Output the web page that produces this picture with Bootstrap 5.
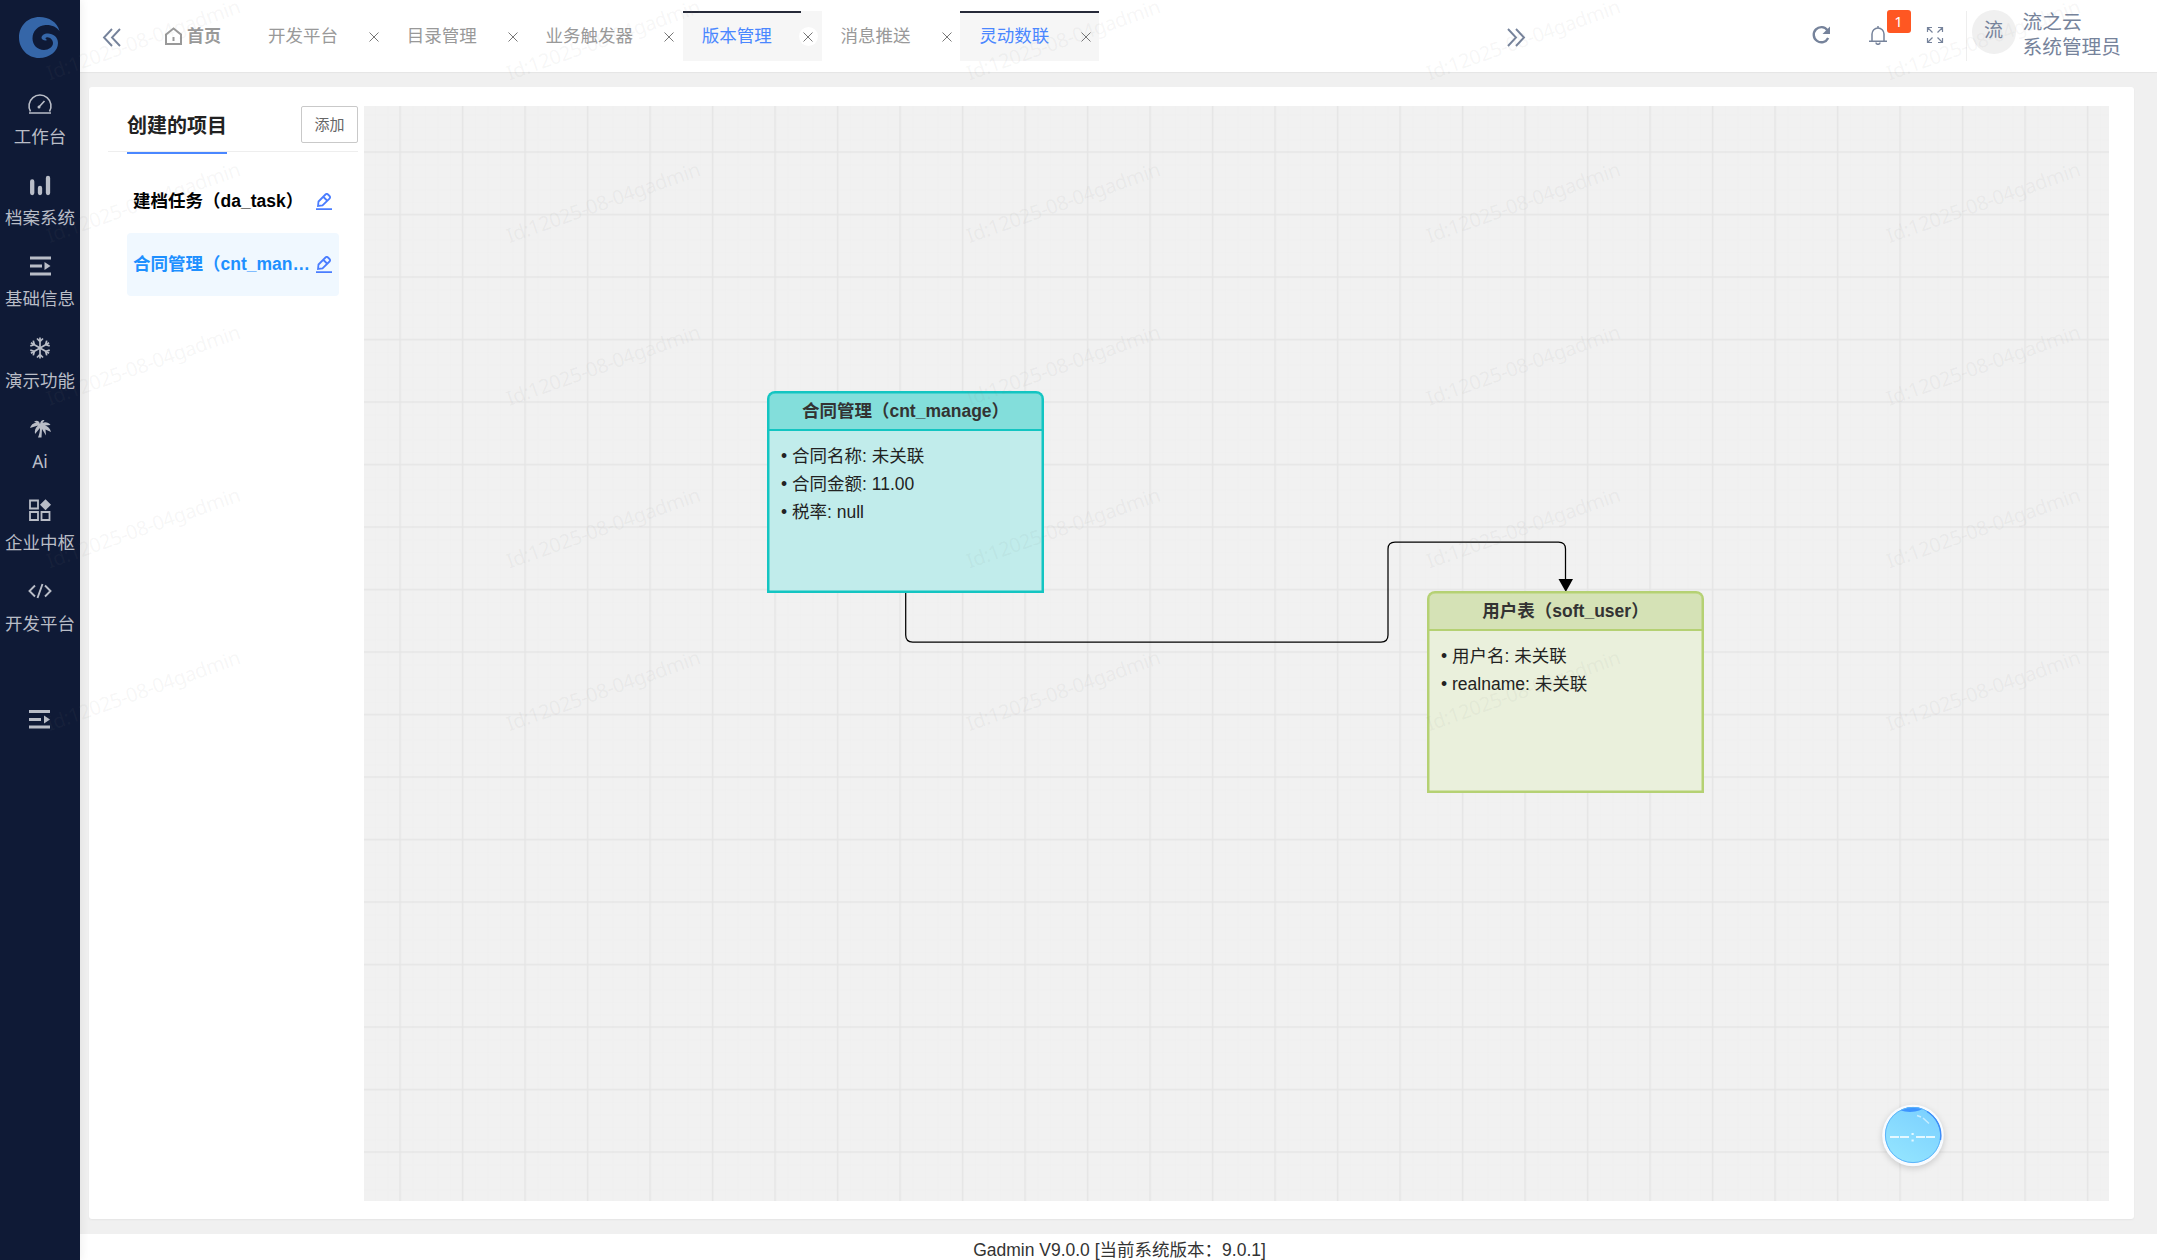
<!DOCTYPE html>
<html lang="zh-CN">
<head>
<meta charset="utf-8">
<title>Gadmin</title>
<link rel="stylesheet" href="https://cdn.jsdelivr.net/npm/bootstrap@5.3.0/dist/css/bootstrap.min.css">
<style>
body{font-family:"Noto Sans","Noto Sans CJK SC",sans-serif;background:#f0f0f0;height:1260px;overflow:hidden;font-size:17.5px;color:#222}
svg{display:block;flex:none}
.arial{font-family:"Liberation Sans","Noto Sans CJK SC",sans-serif}
.side{width:80px;background:#0f1a36;color:#b9bdc7;flex:none;z-index:2;box-shadow:2px 0 8px rgba(0,0,0,.06)}
.side-logo{height:76px;padding:14px 0 0 17px}
.side-item{height:81.2px;padding-top:14px;line-height:24px;white-space:nowrap;flex:none}
.side-item svg{margin-bottom:6px}
.side-fold{padding-top:61px}
.topbar{height:72px;flex:none;box-shadow:0 1px 1px rgba(0,0,0,.04);z-index:1}
.fold-tabs{width:62px;padding:3px 0 0 22px;color:#76839b}
.tab-home{width:107px;padding-left:22px;color:#999;font-weight:700;font-size:17px}
.tab-box{height:50px;width:138.8px;padding:0 4px 1px 19px;color:#999;position:relative;white-space:nowrap}
.tab-box.wide-tab{width:156.2px}
.tab-box.on{background:#f6f6f6;color:#4a87ff}
.tab-box.on::before{content:"";position:absolute;left:0;top:0;width:100%;height:2px;background:#262a39}
.tab-box.part::before{width:118px}
.tab-x{width:19px;height:19px;border-radius:50%;color:#777;margin-top:2px}
.part .tab-x{background:#fff}
.more-tabs{padding-top:2px}
.tools{color:#76839b;padding:0 36px 0 285px}
.tool-icon{position:relative;top:-1px}
.notice-badge{position:absolute;left:19px;top:-15px;width:24px;height:23px;background:#ff5722;color:#fff;font-size:15px;line-height:22px;border-radius:3px;text-align:center}
.user-box{height:50px;margin-left:22px;padding-left:5px;border-left:1px solid #eee}
.avatar{width:44px;height:44px;border-radius:50%;background:#f0f0f0;font-size:19px;line-height:41px;text-align:center;margin-top:-1px}
.who{font-size:19.7px;line-height:25px;margin:-2px 0 0 7px}
.panel{margin:15px 23px 0 9px;height:1132px;flex:none;border-radius:3px;padding:19px 25px 18px 19px;background:#fff;box-shadow:0 1px 2px rgba(0,0,0,.05)}
.left-col{width:256px;flex:none}
.left-head{height:46px;width:250px;border-bottom:1px solid #eee;padding-left:19px;margin-bottom:18px}
.left-title{font-size:20px;font-weight:700;line-height:39px;height:48px;border-bottom:2px solid #4a87ff;width:100px;white-space:nowrap}
.add-btn{width:57px;height:37px;font-size:15px;border:1px solid #c9c9c9;border-radius:2px;color:#666;background:#fff;padding:0}
.proj{height:63px;width:212px;margin-left:19px;padding:0 7px 0 6px;font-weight:700;border-radius:4px;color:#000;white-space:nowrap}
.proj.sel{background:#f0f8ff;color:#1e90ff}
.board{position:relative;flex:1;background:#f1f1f1;overflow:hidden}
.board>svg{position:absolute;left:0;top:0}
.tbl-node{position:absolute;width:277px;height:202px;border-radius:8px 8px 0 0;overflow:hidden}
.tbl-node::after{content:"";position:absolute;inset:0;border:2px solid var(--edge);border-radius:8px 8px 0 0;box-shadow:inset 0 0 0 .5px var(--edge)}
.tbl-node header{height:40px;border-bottom:2px solid var(--edge);text-align:center;font-weight:700;line-height:40px;color:#333}
.tbl-node div{padding:11px 0 0 14px;line-height:28.2px;height:162px;white-space:nowrap}
.node-a{--edge:#13c5c2;left:403px;top:285px;background:#c1eceb}
.node-a header{background:#83dedb}
.node-b{--edge:#b5d173;left:1063px;top:485px;background:#eaf0dc}
.node-b header{background:#d5e2b6}
.foot{margin-top:15px;background:#fff;flex:1;line-height:33px;text-align:center;padding-left:2px;color:#333}
.wm{position:absolute;left:0;top:0;z-index:9;pointer-events:none}
</style>
</head>
<body class="d-flex position-relative">
<nav class="side d-flex flex-column">
 <div class="side-logo"><svg width="44" height="46" viewBox="0 0 44 46"><path fill="#3566a8" d="M42.500 17C40 8 32 3 22.500 3C10.500 3 2 12 2 23.500C2 35 11 44 22 44C33 44 41 37 41 29C41 23 36 19.500 31 19.500C27 19.500 24.500 21.500 24.500 24C25 26 28 27 30.500 26C28 25.500 28 23.500 30 23.300C33 23 36 26 36 29C36 33 31.500 36 27 36C20.500 36 15.500 31 15.500 24.500C15.500 17 21 11.500 28.500 11C35 10.700 39.500 13 42.500 17Z"/></svg></div>
 <div class="side-item d-flex flex-column align-items-center"><svg width="28" height="28" viewBox="0 0 28 28" fill="none" stroke="currentColor" stroke-width="1.600"><path d="M4.500 21.500A11 11 0 1 1 23.500 21.500M3 23h22M12.500 17.500 18.500 11"/><circle cx="13" cy="17" r="1.500" fill="currentColor" stroke="none"/></svg>工作台</div>
 <div class="side-item d-flex flex-column align-items-center"><svg width="28" height="28" viewBox="0 0 28 28" fill="none" stroke="currentColor" stroke-width="4.300" stroke-linecap="round"><path d="M6.200 10.500v11.500M14 17v5M22 7v15"/></svg>档案系统</div>
 <div class="side-item d-flex flex-column align-items-center"><svg width="28" height="28" viewBox="0 0 28 28" fill="currentColor"><path d="M4 4.500h21v3H4zM4 12.500h12v3H4zM4 20.500h21v3H4zM18.500 10l6 4-6 4z"/></svg>基础信息</div>
 <div class="side-item d-flex flex-column align-items-center"><svg width="28" height="28" viewBox="0 0 28 28" fill="none" stroke="currentColor" stroke-width="1.700"><g id="arm"><path d="M14 3.500v21M11 4.500l3 3 3-3M11 23.500l3-3 3 3"/></g><use href="#arm" transform="rotate(60 14 14)"/><use href="#arm" transform="rotate(120 14 14)"/></svg>演示功能</div>
 <div class="side-item d-flex flex-column align-items-center"><svg width="28" height="28" viewBox="0 0 28 28" fill="currentColor"><path d="M14 9C13 5 10 5 8 7L10.500 7.500C7 8 5 10 4 13L12 10.500C9 13 8.500 16 9 19L14 13C14 16 13.500 19 12 22.500H15.500L16 14L20 20.500L19.500 14.500L25 17C24 13 21.500 11 19 10.500L24.500 10C22.500 7 19 6.500 16.500 8L18.500 5C16 4.500 14.500 6 14 9Z"/></svg>Ai</div>
 <div class="side-item d-flex flex-column align-items-center"><svg width="28" height="28" viewBox="0 0 28 28" fill="none" stroke="currentColor" stroke-width="1.800"><path d="M4 4.500h8v8H4zM4 16h8v8H4zM15.500 16h8v8h-8z"/><path d="M19.500 3.200l5.500 5.500-5.500 5.500L14 8.700z" fill="currentColor" stroke="none"/></svg>企业中枢</div>
 <div class="side-item d-flex flex-column align-items-center"><svg width="28" height="28" viewBox="0 0 28 28" fill="none" stroke="currentColor" stroke-width="1.900"><path d="M9 8.500 3.500 14 9 19.500M19 8.500l5.500 5.500-5.500 5.500M16.500 7l-5 14"/></svg>开发平台</div>
 <div class="side-fold d-flex justify-content-center"><svg width="28" height="28" viewBox="0 0 28 28" fill="currentColor"><path d="M3 5h21v3H3zM3 13h12v3H3zM3 20.500h21v3H3zM18 10.500l6 4-6 4z"/></svg></div>
</nav>
<main class="d-flex flex-column flex-grow-1">
 <header class="topbar bg-white d-flex align-items-center">
  <div class="fold-tabs"><svg width="20" height="19" viewBox="0 0 20 19" fill="none" stroke="currentColor" stroke-width="1.900"><path d="M10 1 2 9.500 10 18M18 1 10 9.500 18 18"/></svg></div>
  <div class="tab-home d-flex align-items-center"><svg width="19" height="20" viewBox="0 0 19 20" fill="none" stroke="currentColor" stroke-width="2"><path d="M2 8.500 9.500 2.500 17 8.500V18H2zM9.500 11v4"/></svg><span class="ms-1">首页</span></div>
  <div class="tab-box d-flex align-items-center justify-content-between"><span>开发平台</span><span class="tab-x d-flex align-items-center justify-content-center"><svg width="10" height="10" viewBox="0 0 10 10" stroke="currentColor"><path d="M.5.5l9 9M9.500.5l-9 9"/></svg></span></div>
  <div class="tab-box d-flex align-items-center justify-content-between"><span>目录管理</span><span class="tab-x d-flex align-items-center justify-content-center"><svg width="10" height="10" viewBox="0 0 10 10" stroke="currentColor"><path d="M.5.5l9 9M9.500.5l-9 9"/></svg></span></div>
  <div class="tab-box wide-tab d-flex align-items-center justify-content-between"><span>业务触发器</span><span class="tab-x d-flex align-items-center justify-content-center"><svg width="10" height="10" viewBox="0 0 10 10" stroke="currentColor"><path d="M.5.5l9 9M9.500.5l-9 9"/></svg></span></div>
  <div class="tab-box on part d-flex align-items-center justify-content-between"><span>版本管理</span><span class="tab-x d-flex align-items-center justify-content-center"><svg width="10" height="10" viewBox="0 0 10 10" stroke="currentColor"><path d="M.5.5l9 9M9.500.5l-9 9"/></svg></span></div>
  <div class="tab-box d-flex align-items-center justify-content-between"><span>消息推送</span><span class="tab-x d-flex align-items-center justify-content-center"><svg width="10" height="10" viewBox="0 0 10 10" stroke="currentColor"><path d="M.5.5l9 9M9.500.5l-9 9"/></svg></span></div>
  <div class="tab-box on d-flex align-items-center justify-content-between"><span>灵动数联</span><span class="tab-x d-flex align-items-center justify-content-center"><svg width="10" height="10" viewBox="0 0 10 10" stroke="currentColor"><path d="M.5.5l9 9M9.500.5l-9 9"/></svg></span></div>
  <div class="more-tabs flex-grow-1 d-flex justify-content-end"><svg width="20" height="19" viewBox="0 0 20 19" fill="none" stroke="#76839b" stroke-width="1.900"><path d="M2 1l8 8.500L2 18M10 1l8 8.500L10 18"/></svg></div>
  <div class="tools d-flex align-items-center">
   <svg class="tool-icon" width="20" height="20" viewBox="0 0 20 20" fill="none" stroke="currentColor" stroke-width="2.400"><path d="M16.500 5.200A7.600 7.600 0 1 0 17.200 13"/><path d="M19 1.500v7.500h-7.500z" fill="currentColor" stroke="none"/></svg>
   <div class="tool-icon" style="margin-left:37px"><svg width="20" height="20" viewBox="0 0 20 20" fill="none" stroke="currentColor" stroke-width="1.500"><path d="M1 16.200h18M4 16V9a6 6 0 0 1 12 0v7M10 1v2M8 17.500a2 1.800 0 0 0 4 0"/></svg><span class="notice-badge">1</span></div>
   <svg class="tool-icon" style="margin-left:38px" width="18" height="18" viewBox="0 0 18 18" fill="none" stroke="currentColor" stroke-width="1.200"><path d="M1.500 6V1.500H6M1.500 1.500l5 5M12 1.500h4.500V6M16.500 1.500l-5 5M1.500 12v4.500H6M1.500 16.500l5-5M12 16.500h4.500V12M16.500 16.500l-5-5"/></svg>
   <div class="user-box d-flex"><div class="avatar">流</div><div class="who"><div>流之云</div><div>系统管理员</div></div></div>
  </div>
 </header>
 <section class="panel d-flex">
  <aside class="left-col">
   <div class="left-head d-flex justify-content-between"><div class="left-title">创建的项目</div><button class="add-btn">添加</button></div>
   <div class="proj arial d-flex align-items-center justify-content-between"><span>建档任务（da_task）</span><svg width="16" height="18" viewBox="0 0 16 18" fill="none" stroke="#4a7dff" stroke-width="1.800"><path d="M0 16.200h16M2 13l.5-4.500L9.500 1.500a1.800 1.800 0 0 1 2.500 0l1.500 1.500a1.800 1.800 0 0 1 0 2.500l-7 7zM7.500 4l3.500 3.500"/></svg></div>
   <div class="proj sel arial d-flex align-items-center justify-content-between"><span>合同管理（cnt_man…</span><svg width="16" height="18" viewBox="0 0 16 18" fill="none" stroke="#4a7dff" stroke-width="1.800"><path d="M0 16.200h16M2 13l.5-4.500L9.500 1.500a1.800 1.800 0 0 1 2.500 0l1.500 1.500a1.800 1.800 0 0 1 0 2.500l-7 7zM7.500 4l3.500 3.500"/></svg></div>
  </aside>
  <div class="board arial">
   <svg width="1745" height="1095">
    <defs>
     <pattern id="fine" x="36" y="46" width="12.500" height="12.500" patternUnits="userSpaceOnUse"><path d="M0 .5H12.500M.5 0V12.500" stroke="#eeeeee" stroke-width=".6"/></pattern>
     <pattern id="coarse" x="35.300" y="45.200" width="62.500" height="62.500" patternUnits="userSpaceOnUse"><path d="M0 .8H62.500M.8 0V62.500" stroke="#e4e4e4" stroke-width="1.250"/></pattern>
    </defs>
    <rect width="1745" height="1095" fill="url(#fine)"/><rect width="1745" height="1095" fill="url(#coarse)"/>
    <path d="M541.700 487V529q0 7 7 7H1017q7 0 7-7V443q0-7 7-7H1194.500q7 0 7 7V474" fill="none" stroke="#000" stroke-width="1.250"/>
    <path d="M1194.500 473h14.500l-7.200 13z"/>
   </svg>
   <article class="tbl-node node-a"><header>合同管理（cnt_manage）</header><div>• 合同名称: 未关联<br>• 合同金额: 11.00<br>• 税率: null</div></article>
   <article class="tbl-node node-b"><header>用户表（soft_user）</header><div>• 用户名: 未关联<br>• realname: 未关联</div></article>
   <svg style="left:1511px;top:991px" width="76" height="78" viewBox="0 0 76 78">
    <defs><linearGradient id="sky" x1=".8" y1="0" x2=".2" y2="1"><stop offset="0" stop-color="#7bd0ff"/><stop offset="1" stop-color="#94e5ff"/></linearGradient><clipPath id="orb"><circle cx="38" cy="38" r="28"/></clipPath></defs>
    <circle cx="38" cy="38.500" r="30.800" fill="#f8fbff" style="filter:drop-shadow(0 2px 3px rgba(0,0,0,.16))"/>
    <circle cx="38" cy="38" r="28" fill="url(#sky)"/>
    <ellipse cx="35" cy="10" rx="13" ry="5" fill="#3d95ff" clip-path="url(#orb)"/>
    <circle cx="38" cy="38" r="27.600" fill="none" stroke="#5cb4fb" stroke-width="1"/>
    <path d="M52 14.500A28 28 0 0 1 65.500 43" fill="none" stroke="#3d8cf8" stroke-width="1.400"/>
    <path d="M42 18.500l4 1.500M48 21l6 5.500" stroke="#c6edff" stroke-width="1.500"/>
    <path d="M15 40h9M25 40h9M41 40h9M51 40h9" stroke="#e4f8ff" stroke-width="2"/>
    <path d="M36.500 36h2.200v2h-2.200zM36.500 42.500h2.200v2h-2.200z" fill="#e4f8ff"/>
   </svg>
  </div>
 </section>
 <footer class="foot arial">Gadmin V9.0.0 [当前系统版本：9.0.1]</footer>
</main>
<svg class="wm" width="2157" height="1260" font-size="20" fill="#808080" fill-opacity=".075"></svg>
<script src="https://cdn.jsdelivr.net/npm/bootstrap@5.3.0/dist/js/bootstrap.bundle.min.js"></script>
<script>
const layer=document.querySelector('.wm');
for(let r=0;r<5;r++)for(let c=0;c<5;c++){
 const t=document.createElementNS('http://www.w3.org/2000/svg','text');
 t.setAttribute('transform',`translate(${49.5+c*460} ${80.5+r*162.7}) rotate(-19.5)`);
 t.setAttribute('textLength',204);
 t.textContent='Id:12025-08-04gadmin';
 layer.append(t);
}
</script>
</body>
</html>
